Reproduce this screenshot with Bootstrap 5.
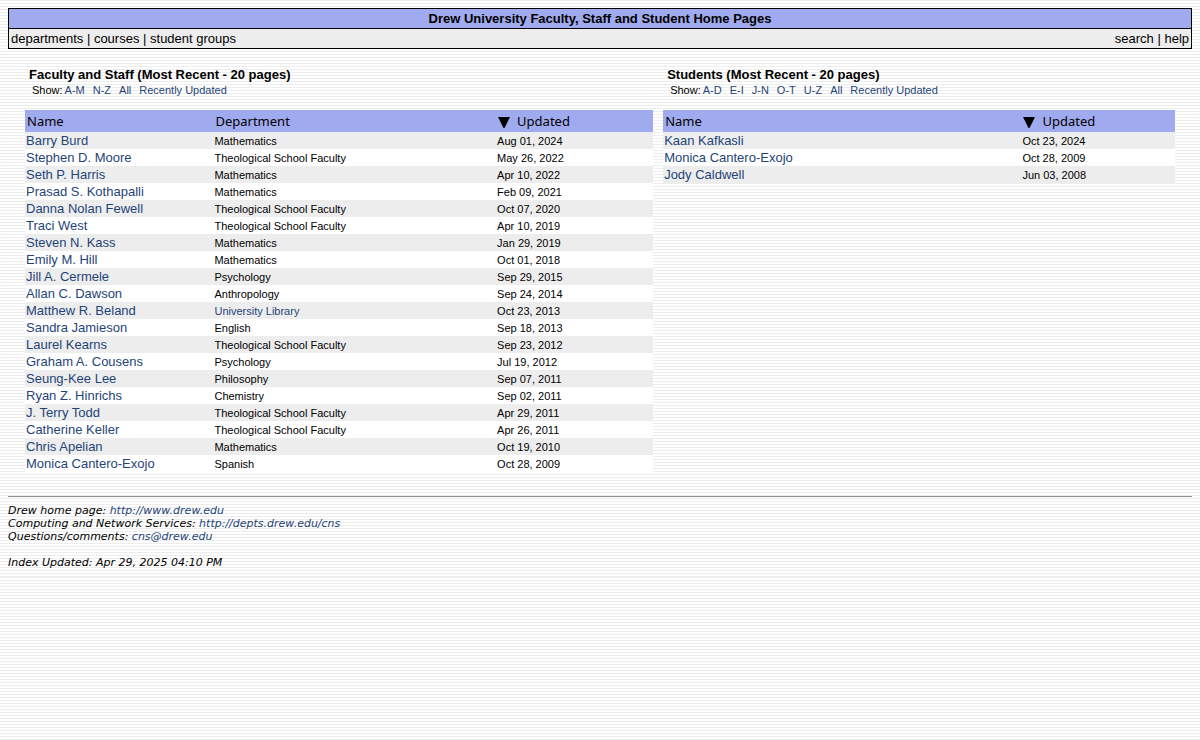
<!DOCTYPE html>
<html lang="en">
<head>
<meta charset="utf-8">
<meta name="viewport" content="width=device-width, initial-scale=1">
<title>Drew University Faculty, Staff and Student Home Pages</title>
<link href="https://cdn.jsdelivr.net/npm/bootstrap@5.3.0/dist/css/bootstrap.min.css" rel="stylesheet">
<style>
body{font-family:"Liberation Sans",Arial,sans-serif;font-size:13px;line-height:17px;color:#000;background:repeating-linear-gradient(to bottom,#ededed 0,#ededed 1px,#fff 1px,#fff 3px);padding:8px}
a{color:#1f4478;text-decoration:none}
a:hover{text-decoration:underline}
.masthead{border:1px solid #000;background:#ededed}
.masthead h1{font-size:13px;line-height:19px;font-weight:700;background:#a0aaee;border-bottom:1px solid #000}
.masthead nav{line-height:19px;padding:0 2px}
.masthead a{color:#000}
.listings{padding:17px 17px 0;gap:10px}
.faculty{flex:551 1 0}
.students{flex:449 1 0}
h2{font-size:13px;line-height:18px;font-weight:700;padding-left:4px}
.filters{font-size:11px;line-height:12px;padding-left:7px;margin-bottom:14px}
.filters a{margin-right:8px}
.filters a:first-of-type{margin-left:2px}
.people{table-layout:fixed;width:100%;background:#fff}
.people th{font-family:"Noto Sans",sans-serif;font-size:13px;font-weight:400;line-height:18px;height:22px;padding:2px;background:#a0aaee}
.people td{height:17px;line-height:15px;padding:1px 1px 0;font-size:11px;vertical-align:baseline}
.people td:first-child{font-size:13px}
.people tbody tr:nth-child(odd){background:#ededed}
.people svg{margin-right:7px}
hr{margin:24px 0 7px;border-top:1px solid #8f8f8f;opacity:1}
footer{font-family:"DejaVu Sans",Verdana,sans-serif;font-size:11px;line-height:13px;font-style:italic}
.updated-note{margin-top:13px}
</style>
</head>
<body>
<header class="masthead">
<h1 class="text-center m-0">Drew University Faculty, Staff and Student Home Pages</h1>
<nav class="d-flex justify-content-between">
<div><a href="#">departments</a> | <a href="#">courses</a> | <a href="#">student groups</a></div>
<div><a href="#">search</a> | <a href="#">help</a></div>
</nav>
</header>
<main class="listings d-flex align-items-start">
<section class="faculty">
<h2 class="mb-0">Faculty and Staff (Most Recent - 20 pages)</h2>
<div class="filters">Show:<a href="#">A-M</a><a href="#">N-Z</a><a href="#">All</a><a href="#">Recently Updated</a></div>
<table class="people">
<colgroup><col style="width:30%"><col style="width:45%"><col style="width:25%"></colgroup>
<thead><tr><th scope="col">Name</th><th scope="col">Department</th><th scope="col"><svg width="12" height="11" viewBox="0 0 12 11" aria-hidden="true"><path d="M0 0H12L6.500 11H5.500Z"/></svg>Updated</th></tr></thead>
<tbody>
<tr><td><a href="#">Barry Burd</a></td><td>Mathematics</td><td>Aug 01, 2024</td></tr>
<tr><td><a href="#">Stephen D. Moore</a></td><td>Theological School Faculty</td><td>May 26, 2022</td></tr>
<tr><td><a href="#">Seth P. Harris</a></td><td>Mathematics</td><td>Apr 10, 2022</td></tr>
<tr><td><a href="#">Prasad S. Kothapalli</a></td><td>Mathematics</td><td>Feb 09, 2021</td></tr>
<tr><td><a href="#">Danna Nolan Fewell</a></td><td>Theological School Faculty</td><td>Oct 07, 2020</td></tr>
<tr><td><a href="#">Traci West</a></td><td>Theological School Faculty</td><td>Apr 10, 2019</td></tr>
<tr><td><a href="#">Steven N. Kass</a></td><td>Mathematics</td><td>Jan 29, 2019</td></tr>
<tr><td><a href="#">Emily M. Hill</a></td><td>Mathematics</td><td>Oct 01, 2018</td></tr>
<tr><td><a href="#">Jill A. Cermele</a></td><td>Psychology</td><td>Sep 29, 2015</td></tr>
<tr><td><a href="#">Allan C. Dawson</a></td><td>Anthropology</td><td>Sep 24, 2014</td></tr>
<tr><td><a href="#">Matthew R. Beland</a></td><td><a href="#">University Library</a></td><td>Oct 23, 2013</td></tr>
<tr><td><a href="#">Sandra Jamieson</a></td><td>English</td><td>Sep 18, 2013</td></tr>
<tr><td><a href="#">Laurel Kearns</a></td><td>Theological School Faculty</td><td>Sep 23, 2012</td></tr>
<tr><td><a href="#">Graham A. Cousens</a></td><td>Psychology</td><td>Jul 19, 2012</td></tr>
<tr><td><a href="#">Seung-Kee Lee</a></td><td>Philosophy</td><td>Sep 07, 2011</td></tr>
<tr><td><a href="#">Ryan Z. Hinrichs</a></td><td>Chemistry</td><td>Sep 02, 2011</td></tr>
<tr><td><a href="#">J. Terry Todd</a></td><td>Theological School Faculty</td><td>Apr 29, 2011</td></tr>
<tr><td><a href="#">Catherine Keller</a></td><td>Theological School Faculty</td><td>Apr 26, 2011</td></tr>
<tr><td><a href="#">Chris Apelian</a></td><td>Mathematics</td><td>Oct 19, 2010</td></tr>
<tr><td><a href="#">Monica Cantero-Exojo</a></td><td>Spanish</td><td>Oct 28, 2009</td></tr>
</tbody>
</table>
</section>
<section class="students">
<h2 class="mb-0">Students (Most Recent - 20 pages)</h2>
<div class="filters">Show:<a href="#">A-D</a><a href="#">E-I</a><a href="#">J-N</a><a href="#">O-T</a><a href="#">U-Z</a><a href="#">All</a><a href="#">Recently Updated</a></div>
<table class="people">
<colgroup><col style="width:70%"><col style="width:30%"></colgroup>
<thead><tr><th scope="col">Name</th><th scope="col"><svg width="12" height="11" viewBox="0 0 12 11" aria-hidden="true"><path d="M0 0H12L6.500 11H5.500Z"/></svg>Updated</th></tr></thead>
<tbody>
<tr><td><a href="#">Kaan Kafkasli</a></td><td>Oct 23, 2024</td></tr>
<tr><td><a href="#">Monica Cantero-Exojo</a></td><td>Oct 28, 2009</td></tr>
<tr><td><a href="#">Jody Caldwell</a></td><td>Jun 03, 2008</td></tr>
</tbody>
</table>
</section>
</main>
<hr>
<footer>
<div>Drew home page: <a href="#">http://www.drew.edu</a></div>
<div>Computing and Network Services: <a href="#">http://depts.drew.edu/cns</a></div>
<div>Questions/comments: <a href="#">cns@drew.edu</a></div>
<div class="updated-note">Index Updated: Apr 29, 2025 04:10 PM</div>
</footer>
<script src="https://cdn.jsdelivr.net/npm/bootstrap@5.3.0/dist/js/bootstrap.bundle.min.js"></script>
</body>
</html>
